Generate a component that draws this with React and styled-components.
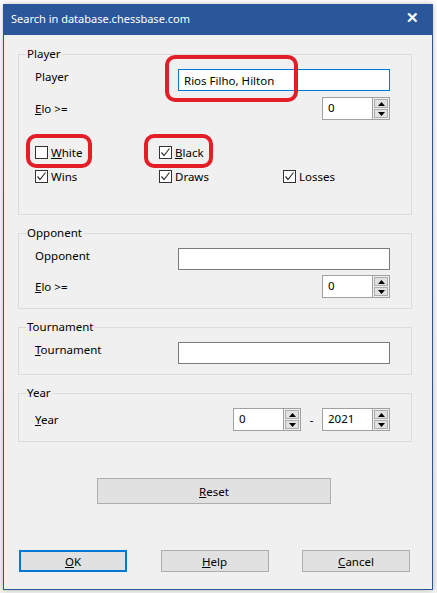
import styled, { createGlobalStyle } from "styled-components"

const Global = createGlobalStyle`
  html, body {
    margin: 0;
    padding: 0;
    background: #ffffff;
  }
  body {
    font-family: "Noto Sans", "Liberation Sans", sans-serif;
    font-size: 11.5px;
    color: #000;
  }
`

const Page = styled.div`
  position: relative;
  width: 437px;
  height: 593px;
  padding: 4px 0 0 3px;
  box-sizing: border-box;
  overflow: hidden;
  background: linear-gradient(#ffffff, #f4f4f4);
`

const Dialog = styled.div`
  width: 430px;
  height: 586px;
  box-sizing: border-box;
  border: 1px solid #2b579a;
  border-top: none;
  background: #f0f0f0;
  display: flex;
  flex-direction: column;
  box-shadow: 0 0 6px rgba(0, 0, 0, 0.25);
`

const TitleBar = styled.div`
  height: 28px;
  margin: 0 -1px;
  background: #2b579a;
  color: #fff;
  display: flex;
  align-items: center;
  justify-content: space-between;
  padding: 0 14px 3px 8px;
  font-size: 11px;
`

const Close = styled.span`
  font-size: 15px;
  font-weight: bold;
  margin-top: -2px;
`

const Body = styled.div`
  flex: 1;
  display: flex;
  flex-direction: column;
  padding: 12px 20px 17px 14px;
`

const Groups = styled.div`
  display: flex;
  flex-direction: column;
  gap: 11px;
`

const Group = styled.fieldset`
  margin: 0;
  padding: 8px 20px ${(p) => p.$pb || 10}px 16px;
  border: 1px solid #dcdcdc;
  min-width: 0;
`

const Legend = styled.legend`
  margin-left: -9px;
  padding: 0 2px 0 1px;
  line-height: 14px;
`

const Row = styled.div`
  display: flex;
  align-items: ${(p) => (p.$top ? "flex-start" : "center")};
  margin-top: ${(p) => p.$mt || 0}px;
  min-height: 22px;
`

const Label = styled.span`
  width: 143px;
  flex-shrink: 0;
  line-height: 16px;
`

const TextBox = styled.div`
  width: 212px;
  height: 22px;
  box-sizing: border-box;
  background: #fff;
  border: 1px solid ${(p) => (p.$focused ? "#0078d7" : "#7a7a7a")};
  padding: 0 5px;
  display: flex;
  align-items: center;
`

const SpinWrap = styled.div`
  display: flex;
  align-items: center;
  margin-left: auto;
  margin-right: 1px;
`

const Spin = styled.div`
  width: 68px;
  height: 23px;
  box-sizing: border-box;
  border: 1px solid #a0a0a0;
  background: #fff;
  display: flex;
`

const SpinText = styled.div`
  flex: 1;
  padding: 1px 0 0 5px;
  border-right: 1px solid #a0a0a0;
  line-height: 18px;
`

const SpinButtons = styled.div`
  width: 16px;
  display: flex;
  flex-direction: column;
  gap: 1px;
  padding: 1px;
  box-sizing: border-box;
  background: #f0f0f0;
`

const SpinButton = styled.div`
  flex: 1;
  border: 1px solid #adadad;
  background: #e1e1e1;
  display: flex;
  align-items: center;
  justify-content: center;
`

const Dash = styled.span`
  width: 21px;
  text-align: center;
`

const CheckGrid = styled.div`
  display: grid;
  grid-template-columns: 124px 124px 1fr;
  margin-top: ${(p) => p.$mt || 0}px;
  height: 16px;
  align-items: center;
`

const Check = styled.label`
  display: flex;
  align-items: center;
  gap: 3px;
`

const Box = styled.span`
  width: 13px;
  height: 13px;
  box-sizing: border-box;
  border: 1px solid #333;
  background: #fff;
  display: flex;
  align-items: center;
  justify-content: center;
`

const Button = styled.div`
  height: ${(p) => p.$h || 22}px;
  width: ${(p) => p.$w || 108}px;
  box-sizing: border-box;
  background: #e1e1e1;
  border: ${(p) => (p.$default ? "2px solid #0078d7" : "1px solid #adadad")};
  display: flex;
  align-items: center;
  justify-content: center;
`

const ResetRow = styled.div`
  display: flex;
  justify-content: center;
  margin-top: 36px;
  padding-right: 2px;
`

const ButtonRow = styled.div`
  display: flex;
  justify-content: space-between;
  margin: auto 2px 0 1px;
`

const Mark = styled.div`
  position: absolute;
  left: ${(p) => p.$x}px;
  top: ${(p) => p.$y}px;
  width: ${(p) => p.$w}px;
  height: ${(p) => p.$h}px;
  box-sizing: border-box;
  border: 4px solid #e31e26;
  border-radius: 10px;
`

const Arrow = ({ up }) => (
  <svg width="7" height="4" viewBox="0 0 7 4">
    <polygon points={up ? "0,4 7,4 3.5,0" : "0,0 7,0 3.5,4"} fill="#000" />
  </svg>
)

const Spinner = ({ value }) => (
  <Spin>
    <SpinText>{value}</SpinText>
    <SpinButtons>
      <SpinButton>
        <Arrow up />
      </SpinButton>
      <SpinButton>
        <Arrow />
      </SpinButton>
    </SpinButtons>
  </Spin>
)

const CheckBox = ({ checked, children }) => (
  <Check>
    <Box>
      {checked && (
        <svg width="11" height="11" viewBox="0 0 11 11">
          <polyline
            points="1.5,5.5 4,8.5 9.5,1.5"
            fill="none"
            stroke="#333"
            strokeWidth="1.2"
          />
        </svg>
      )}
    </Box>
    <span>{children}</span>
  </Check>
)

const App = () => {
  return (
    <>
      <Global />
      <Page>
        <Dialog>
          <TitleBar>
            <span>Search in database.chessbase.com</span>
            <Close>✕</Close>
          </TitleBar>
          <Body>
            <Groups>
              <Group $pb={30}>
                <Legend>Player</Legend>
                <Row $top>
                  <Label>Player</Label>
                  <TextBox $focused>Rios Filho, Hilton</TextBox>
                </Row>
                <Row $mt={6}>
                  <Label>
                    <u>E</u>lo &gt;=
                  </Label>
                  <SpinWrap>
                    <Spinner value="0" />
                  </SpinWrap>
                </Row>
                <CheckGrid $mt={24}>
                  <CheckBox>
                    <u>W</u>hite
                  </CheckBox>
                  <CheckBox checked>
                    <u>B</u>lack
                  </CheckBox>
                </CheckGrid>
                <CheckGrid $mt={8}>
                  <CheckBox checked>Wins</CheckBox>
                  <CheckBox checked>Draws</CheckBox>
                  <CheckBox checked>Losses</CheckBox>
                </CheckGrid>
              </Group>

              <Group>
                <Legend>Opponent</Legend>
                <Row $top>
                  <Label>Opponent</Label>
                  <TextBox />
                </Row>
                <Row $mt={5}>
                  <Label>
                    <u>E</u>lo &gt;=
                  </Label>
                  <SpinWrap>
                    <Spinner value="0" />
                  </SpinWrap>
                </Row>
              </Group>

              <Group>
                <Legend>Tournament</Legend>
                <Row $top>
                  <Label>
                    <u>T</u>ournament
                  </Label>
                  <TextBox />
                </Row>
              </Group>

              <Group>
                <Legend>Year</Legend>
                <Row>
                  <Label>
                    <u>Y</u>ear
                  </Label>
                  <SpinWrap>
                    <Spinner value="0" />
                    <Dash>-</Dash>
                    <Spinner value="2021" />
                  </SpinWrap>
                </Row>
              </Group>
            </Groups>

            <ResetRow>
              <Button $w={234} $h={26}>
                <span>
                  <u>R</u>eset
                </span>
              </Button>
            </ResetRow>

            <ButtonRow>
              <Button $default>
                <span>
                  <u>O</u>K
                </span>
              </Button>
              <Button>
                <span>
                  <u>H</u>elp
                </span>
              </Button>
              <Button>
                <span>
                  <u>C</u>ancel
                </span>
              </Button>
            </ButtonRow>
          </Body>
        </Dialog>

        {/* red annotation marks drawn over the dialog */}
        <Mark $x={165} $y={55} $w={133} $h={47} />
        <Mark $x={26} $y={134} $w={66} $h={34} />
        <Mark $x={144} $y={134} $w={69} $h={34} />
      </Page>
    </>
  )
}

export default App
